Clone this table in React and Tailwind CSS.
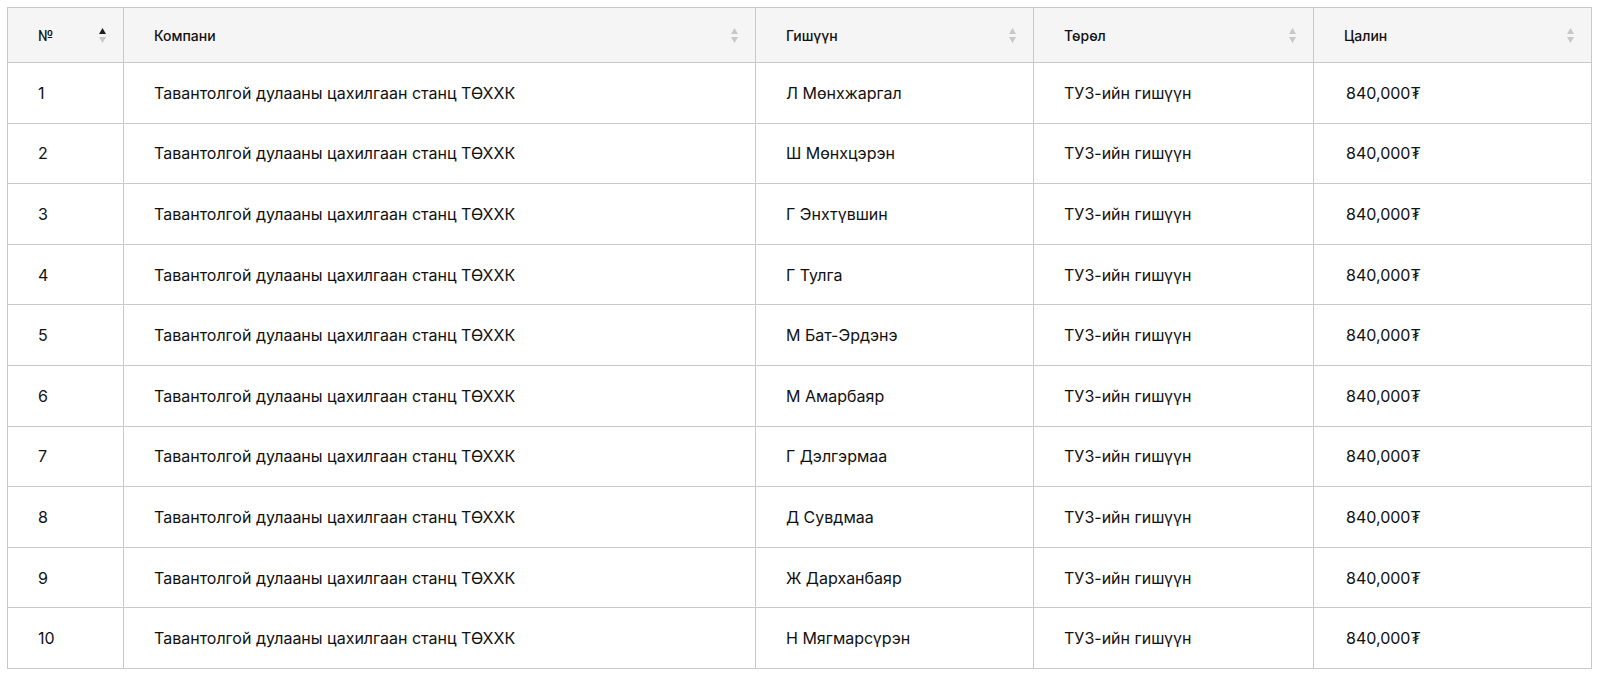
import React from "react";

const names = [
  "Л Мөнхжаргал",
  "Ш Мөнхцэрэн",
  "Г Энхтүвшин",
  "Г Тулга",
  "М Бат-Эрдэнэ",
  "М Амарбаяр",
  "Г Дэлгэрмаа",
  "Д Сувдмаа",
  "Ж Дарханбаяр",
  "Н Мягмарсүрэн",
];

function SortIcon({ active }) {
  return (
    <span className="flex flex-col items-center gap-[3px]">
      <svg width="7" height="6" viewBox="0 0 7 6">
        <path d="M3.5 0 L7 6 L0 6 Z" fill={active ? "#1f1f1f" : "#c8c8c8"} />
      </svg>
      <svg width="7" height="6" viewBox="0 0 7 6">
        <path d="M0 0 L7 0 L3.5 6 Z" fill="#c8c8c8" />
      </svg>
    </span>
  );
}

function Th({ children, w, active }) {
  return (
    <th
      className={`border border-[#c9c9c9] bg-[#f5f5f5] h-[55px] pl-[30px] pr-[17px] text-left font-medium text-[14px] text-[#111111] ${w}`}
    >
      <div className="flex items-center justify-between">
        <span>{children}</span>
        <SortIcon active={active} />
      </div>
    </th>
  );
}

const td = "border border-[#c9c9c9] text-[16px] text-[#111111]";

export default function App() {
  return (
    <div
      className="bg-white pt-[7px] pl-[7px] w-[1600px] h-[673px]"
      style={{ fontFamily: "Inter, 'Noto Sans', sans-serif" }}
    >
      <table className="border-collapse w-[1584px] table-fixed">
        <thead>
          <tr>
            <Th w="w-[116px]" active>№</Th>
            <Th w="w-[632px]">Компани</Th>
            <Th w="w-[278px]">Гишүүн</Th>
            <Th w="w-[280px]">Төрөл</Th>
            <Th w="w-[278px]">Цалин</Th>
          </tr>
        </thead>
        <tbody>
          {names.map((n, i) => (
            <tr key={i} className="h-[60.6px]">
              <td className={`${td} pl-[30px]`}>{i + 1}</td>
              <td className={`${td} pl-[30px]`}>Тавантолгой дулааны цахилгаан станц ТӨХХК</td>
              <td className={`${td} pl-[30px]`}>{n}</td>
              <td className={`${td} pl-[30px]`}>ТУЗ-ийн гишүүн</td>
              <td className={`${td} pl-[32px]`}>840,000₮</td>
            </tr>
          ))}
        </tbody>
      </table>
    </div>
  );
}
